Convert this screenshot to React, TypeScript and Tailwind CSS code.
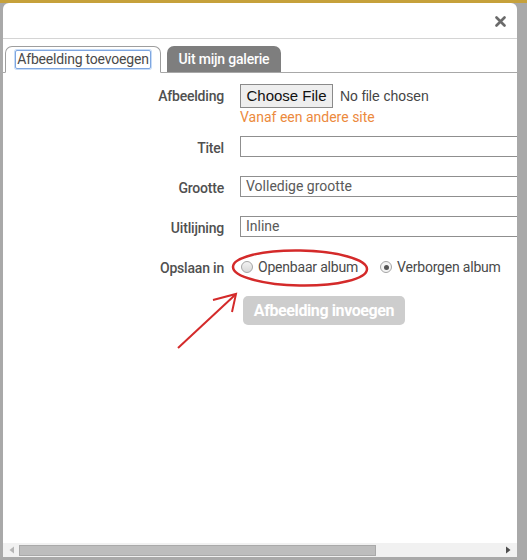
import React from "react";

const rowLabel = "w-[221px] shrink-0 text-right text-[14px] font-medium leading-[20px] tracking-[-0.2px] text-[#505050]";

function Field({ label, value }: { label: string; value?: string }) {
  return (
    <div className="flex h-[40px] items-start">
      <div className={`${rowLabel} pt-[2px]`}>{label}</div>
      <div className="ml-[16px] flex h-[21px] w-[300px] shrink-0 items-center border border-[#8f8f8f] px-[5px] text-[14px] text-[#5a5a5a]">
        {value}
      </div>
    </div>
  );
}

export default function App() {
  return (
    <div className="relative h-[560px] w-[527px] overflow-hidden bg-[#a9a9a9] font-['Roboto',sans-serif]">
      <div className="h-[3px] w-full bg-[#c6a13b]" />
      <div className="ml-[3px] flex h-[554px] w-[514px] flex-col overflow-hidden rounded-t-[6px] bg-white">
        <header className="flex h-[36px] shrink-0 items-center justify-end border-b border-[#d4d4d4] pr-[11px]">
          <svg width="11" height="11" viewBox="0 0 11 11" className="mt-[2px]">
            <path d="M1.5 1.5 L9.5 9.5 M9.5 1.5 L1.5 9.5" stroke="#6b6b6b" strokeWidth="2.6" strokeLinecap="round" />
          </svg>
        </header>

        <div className="relative flex-1 overflow-hidden">
          <nav className="mt-[7px] flex items-end gap-[6px] border-b border-[#a8a8a8] pl-[2px]">
            <div className="-mb-px flex h-[27px] w-[156px] items-center justify-center rounded-t-[7px] border border-b-white border-[#9e9e9e] bg-white">
              <span className="rounded-[2px] border border-[#7ea6e0] px-[1px] text-[14px] leading-[17px] tracking-[-0.2px] text-[#4a4a4a] shadow-[0_0_0_1px_#c7dcf7]">
                Afbeelding toevoegen
              </span>
            </div>
            <div className="flex h-[26px] w-[114px] items-center justify-center rounded-t-[7px] bg-[#7e7e7e] text-[14px] font-medium tracking-[-0.2px] text-white">
              Uit mijn galerie
            </div>
          </nav>

          <form className="w-[700px]">
            <div className="mt-[11px] flex items-start">
              <div className={`${rowLabel} pt-[2px]`}>Afbeelding</div>
              <div className="ml-[16px]">
                <div className="flex items-center">
                  <div className="flex h-[24px] w-[93px] items-center justify-center border border-[#8a8a8a] bg-[#eeeeee] font-['Liberation_Sans',sans-serif] text-[15px] text-[#111]">
                    Choose File
                  </div>
                  <span className="ml-[7px] font-['Liberation_Sans',sans-serif] text-[14px] text-[#444]">No file chosen</span>
                </div>
                <div className="text-[14px] leading-[18px] text-[#ec8a3d]">Vanaf een andere site</div>
              </div>
            </div>

            <div className="mt-[10px]">
              <Field label="Titel" />
              <Field label="Grootte" value="Volledige grootte" />
              <Field label="Uitlijning" value="Inline" />
            </div>

            <div className="flex h-[22px] items-center">
              <div className={`${rowLabel} pt-[2px]`}>Opslaan in</div>
              <div className="ml-[17px] flex items-center text-[14px] tracking-[-0.2px] text-[#4a4a4a]">
                <span className="h-[12px] w-[12px] rounded-full border border-[#a5a5a5] bg-gradient-to-b from-[#f2f2f2] to-[#d8d8d8]" />
                <span className="ml-[5px]">Openbaar album</span>
                <span className="ml-[22px] flex h-[12px] w-[12px] items-center justify-center rounded-full border border-[#a5a5a5] bg-[#f4f4f4]">
                  <span className="h-[5px] w-[5px] rounded-full bg-[#555]" />
                </span>
                <span className="ml-[5px]">Verborgen album</span>
              </div>
            </div>

            <div className="ml-[240px] mt-[18px] flex h-[29px] w-[162px] items-center justify-center rounded-[5px] bg-[#cdcdcd] text-[16px] font-bold tracking-[-0.4px] text-white">
              Afbeelding invoegen
            </div>
          </form>

          <svg className="pointer-events-none absolute left-0 top-0" width="514" height="400" viewBox="0 0 514 400">
            <ellipse cx="297" cy="229" rx="67" ry="17.5" fill="none" stroke="#d42a2a" strokeWidth="2.5" transform="rotate(1 297 229)" />
            <path d="M175 309 L232 256" stroke="#d42a2a" strokeWidth="2" fill="none" />
            <path d="M210 261 L233 255 L229 273" stroke="#d42a2a" strokeWidth="2" fill="none" />
          </svg>
        </div>

        <div className="flex h-[14px] shrink-0 items-center bg-[#f1f1f1] px-[5px]">
          <svg width="8" height="8" viewBox="0 0 8 8">
            <path d="M6 0.5 L1.5 4 L6 7.5 Z" fill="#b5b5b5" />
          </svg>
          <div className="ml-[3px] h-[11px] w-[357px] border border-[#a9a9a9] bg-[#bdbdbd]" />
          <div className="flex-1" />
          <svg width="8" height="8" viewBox="0 0 8 8">
            <path d="M2 0.5 L6.5 4 L2 7.5 Z" fill="#4d4d4d" />
          </svg>
        </div>
      </div>
    </div>
  );
}
